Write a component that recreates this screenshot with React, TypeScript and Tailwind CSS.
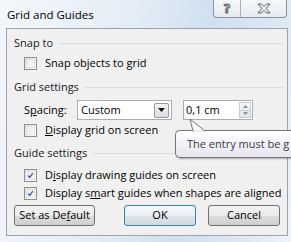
import React from 'react';

const font = "font-['Segoe_UI','Open_Sans','Noto_Sans',sans-serif]";

function Checkbox({ checked, children }: { checked?: boolean; children: React.ReactNode }) {
  return (
    <div className="flex h-[18px] items-center pl-[17px]">
      <div className="flex h-[13px] w-[13px] items-center justify-center border border-[#8e8f8f] bg-[linear-gradient(135deg,#dcdcdc,#ffffff)] p-[1px]">
        <div className="flex h-full w-full items-center justify-center border border-[#e3e3e3] bg-[linear-gradient(135deg,#e9e9e9,#fafafa)]">
          {checked ? (
            <svg width="9" height="9" viewBox="0 0 9 9">
              <path d="M1.5 4.5 L3.6 7 L7.5 1.5" fill="none" stroke="#4c61a0" strokeWidth="1.8" />
            </svg>
          ) : null}
        </div>
      </div>
      <span className="ml-[8px] whitespace-nowrap text-[11px] text-black">{children}</span>
    </div>
  );
}

function GroupLabel({ children }: { children: React.ReactNode }) {
  return (
    <div className="flex h-[18px] items-center pl-[7px] pr-[4px]">
      <span className="whitespace-nowrap text-[11px] text-[#1a1a1a]">{children}</span>
      <div className="ml-[6px] h-0 flex-1 border-t border-[#dadada] border-b-white" />
    </div>
  );
}

function Button({ children, primary, w }: { children: React.ReactNode; primary?: boolean; w: string }) {
  return (
    <div
      className={`flex h-[21px] ${w} items-center justify-center rounded-[3px] border ${
        primary ? 'border-[#3c7fb1] bg-[linear-gradient(#f4f8fb,#e9eef3_50%,#dde4ea_51%,#d3dbe2)]' : 'border-[#707070] bg-[linear-gradient(#f2f2f2,#ebebeb_50%,#dddddd_51%,#cfcfcf)]'
      } whitespace-nowrap text-[11px] text-black`}
    >
      {children}
    </div>
  );
}

export default function App() {
  return (
    <div className={`relative h-[242px] w-[291px] overflow-hidden bg-[linear-gradient(100deg,#f3f7fb_0%,#e4edf6_40%,#cfe0ef_65%,#dde8f3_85%,#eef3f8_100%)] ${font}`}>
      <div className="flex h-[28px] items-start justify-between">
        <div className="pl-[7px] pt-[6px] text-[11.5px] text-black">Grid and Guides</div>
        <div className="mr-[4px] flex h-[18px] overflow-hidden rounded-b-[4px] border border-t-0 border-[#8c939b] bg-[linear-gradient(#f6f8fa,#e6ebf0)]">
          <div className="flex w-[27px] items-center justify-center border-r border-[#a9b0b8]">
            <span className="text-[13px] font-bold leading-none text-transparent [-webkit-text-stroke:1px_#5a5e63]">?</span>
          </div>
          <div className="flex w-[45px] items-center justify-center">
            <svg width="14" height="11" viewBox="0 0 14 11">
              <path
                d="M1 1 H4.5 L7 3.6 L9.5 1 H13 L9 5.5 L13 10 H9.5 L7 7.4 L4.5 10 H1 L5 5.5 Z"
                fill="#eef1f4"
                stroke="#5a5e63"
                strokeWidth="1"
              />
            </svg>
          </div>
        </div>
      </div>

      <div className="ml-[6px] mr-[3px] h-[208px] border border-[#9ba4ae] bg-[#f0f0f0] pt-[5px]">
        <GroupLabel>Snap to</GroupLabel>
        <div className="mt-[2px]">
          <Checkbox>
            Snap objects to <u>g</u>rid
          </Checkbox>
        </div>
        <div className="mt-[6px]">
          <GroupLabel>Grid settings</GroupLabel>
        </div>
        <div className="mt-[4px] flex h-[20px] items-center pl-[17px]">
          <span className="w-[53px] whitespace-nowrap text-[11px] text-black">
            S<u>p</u>acing:
          </span>
          <div className="flex h-[20px] w-[95px] items-center justify-between border border-[#abadb3] bg-white pl-[3px] pr-[2px]">
            <span className="text-[11px] text-black">Custom</span>
            <div className="flex h-[15px] w-[15px] items-center justify-center rounded-[2px] border border-[#8f9aa6] bg-[linear-gradient(#f4f4f4,#dcdcdc)]">
              <svg width="7" height="4" viewBox="0 0 7 4">
                <path d="M0 0 H7 L3.5 4 Z" fill="#111" />
              </svg>
            </div>
          </div>
          <div className="ml-[11px] flex h-[20px] w-[70px] items-center justify-between border border-[#abadb3] bg-white pl-[2px] pr-[1px]">
            <span className="whitespace-nowrap text-[11px] text-black">0,1 cm</span>
            <div className="flex h-[16px] w-[12px] flex-col border border-[#c7cdd4] bg-[linear-gradient(#f5f6f7,#e1e4e8)]">
              <div className="flex flex-1 items-center justify-center border-b border-[#c7cdd4]">
                <svg width="5" height="3" viewBox="0 0 5 3">
                  <path d="M0 3 H5 L2.5 0 Z" fill="#8a9099" />
                </svg>
              </div>
              <div className="flex flex-1 items-center justify-center">
                <svg width="5" height="3" viewBox="0 0 5 3">
                  <path d="M0 0 H5 L2.5 3 Z" fill="#8a9099" />
                </svg>
              </div>
            </div>
          </div>
        </div>
        <div className="mt-[1px]">
          <Checkbox>
            <u>D</u>isplay grid on screen
          </Checkbox>
        </div>
        <div className="mt-[5px]">
          <GroupLabel>Guide settings</GroupLabel>
        </div>
        <div className="mt-[4px]">
          <Checkbox checked>
            D<u>i</u>splay drawing guides on screen
          </Checkbox>
        </div>
        <Checkbox checked>
          Display s<u>m</u>art guides when shapes are aligned
        </Checkbox>
        <div className="mt-[3px] flex pl-[7px]">
          <Button w="w-[81px]">
            Set as De<u>f</u>ault
          </Button>
          <div className="ml-[29px]">
            <Button w="w-[72px]" primary>
              OK
            </Button>
          </div>
          <div className="ml-[12px]">
            <Button w="w-[72px]">Cancel</Button>
          </div>
        </div>
      </div>

      <div className="absolute left-[175px] top-[130px] flex h-[28px] w-[116px] items-center overflow-hidden whitespace-nowrap rounded-l-[5px] border border-r-0 border-[#767676] bg-[linear-gradient(#ffffff,#e4e5f0)] pl-[11px] text-[11px] text-[#3b3b3b] shadow-[1px_1px_2px_rgba(0,0,0,0.3)]">
        The entry must be g
      </div>
      <svg className="absolute left-[188px] top-[118px]" width="20" height="14" viewBox="0 0 20 14">
        <path d="M2 1 L5 13 L17 13 Z" fill="#ffffff" stroke="#767676" strokeWidth="1" />
        <path d="M5.5 13 L16 13" stroke="#ffffff" strokeWidth="1.5" />
      </svg>
    </div>
  );
}
